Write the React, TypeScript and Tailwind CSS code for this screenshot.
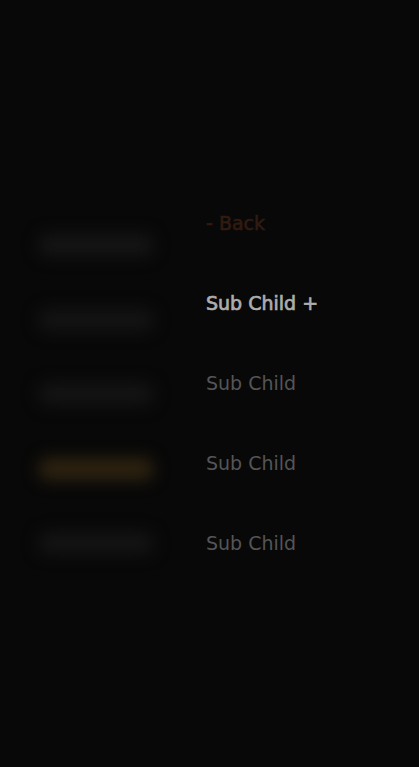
/**
 * App.tsx
 * Off-canvas sub menu: blurred parent menu on the left, active child list on the right.
 */

// Blurred parent items behind the sub menu
const PARENT_ITEMS = [
  { tone: 'bg-[#151515]' },
  { tone: 'bg-[#141414]' },
  { tone: 'bg-[#141414]' },
  { tone: 'bg-[#2e2310]' },
  { tone: 'bg-[#141414]' },
];

const CHILD_ITEMS = [
  { label: 'Sub Child +', active: true },
  { label: 'Sub Child', active: false },
  { label: 'Sub Child', active: false },
  { label: 'Sub Child', active: false },
];

export default function App() {
  return (
    <div
      className="w-[419px] h-[767px] bg-[#080808] overflow-hidden flex"
      style={{ fontFamily: '"DejaVu Sans", Verdana, sans-serif' }}
    >
      {/* ── Parent menu (blurred) ─────────────────────────────── */}
      <div className="w-[206px] pt-[234px] pl-[39px] flex flex-col gap-[52.5px]">
        {PARENT_ITEMS.map((item, i) => (
          <div
            key={i}
            className={`w-[114px] h-[22px] rounded-lg blur-[8px] ${item.tone}`}
          />
        ))}
      </div>

      {/* ── Sub menu ─────────────────────────────────────────── */}
      <nav className="pt-[209px] flex flex-col">
        <a className="h-[80px] text-[19px] leading-[28px] text-[#311b11] [-webkit-text-stroke:0.6px_#311b11]">
          - Back
        </a>
        {CHILD_ITEMS.map((item, i) => (
          <a
            key={i}
            className={
              item.active
                ? 'h-[80px] text-[19px] leading-[28px] text-[#adadad] [-webkit-text-stroke:0.7px_#adadad]'
                : 'h-[80px] text-[19px] leading-[28px] text-[#555555]'
            }
          >
            {item.label}
          </a>
        ))}
      </nav>
    </div>
  );
}
